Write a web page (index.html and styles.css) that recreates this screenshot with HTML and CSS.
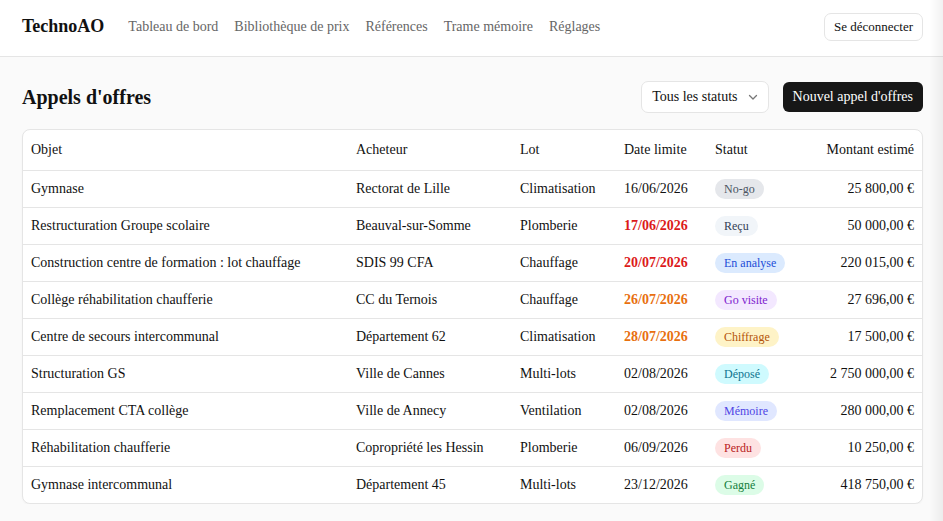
FILE: index.html
```html
<!DOCTYPE html>
<html lang="fr">
<head>
<meta charset="utf-8">
<title>TechnoAO</title>
<link rel="stylesheet" href="styles.css">
</head>
<body>
<header class="topbar">
  <div class="brand">TechnoAO</div>
  <nav class="nav">
    <a href="#">Tableau de bord</a>
    <a href="#">Bibliothèque de prix</a>
    <a href="#">Références</a>
    <a href="#">Trame mémoire</a>
    <a href="#">Réglages</a>
  </nav>
  <button class="btn-outline">Se déconnecter</button>
</header>
<main class="main">
  <div class="toolbar">
    <h1 class="title">Appels d'offres</h1>
    <div class="actions">
      <div class="select">Tous les statuts
        <svg class="chev" width="12" height="12" viewBox="0 0 12 12"><path d="M2.5 4.5 6 8l3.5-3.5" fill="none" stroke="#777" stroke-width="1.3" stroke-linecap="round" stroke-linejoin="round"/></svg>
      </div>
      <button class="btn-dark">Nouvel appel d'offres</button>
    </div>
  </div>
  <div class="card">
    <table class="tbl">
      <colgroup>
        <col class="c-obj"><col class="c-ach"><col class="c-lot"><col class="c-date"><col class="c-stat"><col class="c-mont">
      </colgroup>
      <thead>
        <tr><th>Objet</th><th>Acheteur</th><th>Lot</th><th>Date limite</th><th>Statut</th><th class="r">Montant estimé</th></tr>
      </thead>
      <tbody>
        <tr><td>Gymnase</td><td>Rectorat de Lille</td><td>Climatisation</td><td>16/06/2026</td><td><span class="badge b-nogo">No-go</span></td><td class="r">25 800,00 €</td></tr>
        <tr><td>Restructuration Groupe scolaire</td><td>Beauval-sur-Somme</td><td>Plomberie</td><td class="d-red">17/06/2026</td><td><span class="badge b-recu">Reçu</span></td><td class="r">50 000,00 €</td></tr>
        <tr><td>Construction centre de formation : lot chauffage</td><td>SDIS 99 CFA</td><td>Chauffage</td><td class="d-red">20/07/2026</td><td><span class="badge b-analyse">En analyse</span></td><td class="r">220 015,00 €</td></tr>
        <tr><td>Collège réhabilitation chaufferie</td><td>CC du Ternois</td><td>Chauffage</td><td class="d-orange">26/07/2026</td><td><span class="badge b-visite">Go visite</span></td><td class="r">27 696,00 €</td></tr>
        <tr><td>Centre de secours intercommunal</td><td>Département 62</td><td>Climatisation</td><td class="d-orange">28/07/2026</td><td><span class="badge b-chiffrage">Chiffrage</span></td><td class="r">17 500,00 €</td></tr>
        <tr><td>Structuration GS</td><td>Ville de Cannes</td><td>Multi-lots</td><td>02/08/2026</td><td><span class="badge b-depose">Déposé</span></td><td class="r">2 750 000,00 €</td></tr>
        <tr><td>Remplacement CTA collège</td><td>Ville de Annecy</td><td>Ventilation</td><td>02/08/2026</td><td><span class="badge b-memoire">Mémoire</span></td><td class="r">280 000,00 €</td></tr>
        <tr><td>Réhabilitation chaufferie</td><td>Copropriété les Hessin</td><td>Plomberie</td><td>06/09/2026</td><td><span class="badge b-perdu">Perdu</span></td><td class="r">10 250,00 €</td></tr>
        <tr><td>Gymnase intercommunal</td><td>Département 45</td><td>Multi-lots</td><td>23/12/2026</td><td><span class="badge b-gagne">Gagné</span></td><td class="r">418 750,00 €</td></tr>
      </tbody>
    </table>
  </div>
</main>
<div class="edge-shade"></div>
</body>
</html>
```
FILE: styles.css
```css
* { box-sizing: border-box; }
html, body { margin: 0; padding: 0; }
body {
  font-family: "Liberation Serif", "Times New Roman", serif;
  background: #fafafa;
  color: #111;
  font-size: 14px;
}
.topbar {
  height: 57px;
  background: #fff;
  border-bottom: 1px solid #e5e5e5;
  display: flex;
  align-items: center;
  padding: 0 20px 3px 22px;
}
.brand {
  font-weight: bold;
  font-size: 18px;
  color: #111;
  margin-right: 24px;
}
.nav { display: flex; gap: 16px; flex: 1; }
.nav a {
  color: #666;
  text-decoration: none;
  font-size: 14px;
}
.btn-outline {
  font-family: inherit;
  font-size: 13px;
  color: #111;
  background: #fff;
  border: 1px solid #e5e5e5;
  border-radius: 7px;
  height: 28px;
  padding: 0 9px;
}
.main { padding: 24px 20px 0 22px; }
.toolbar {
  display: flex;
  align-items: center;
  justify-content: space-between;
  height: 32px;
  margin-bottom: 16px;
}
.title {
  margin: 0;
  font-size: 20px;
  font-weight: bold;
}
.actions { display: flex; gap: 14px; align-items: center; }
.select {
  height: 32px;
  border: 1px solid #e5e5e5;
  border-radius: 7px;
  background: #fff;
  display: flex;
  align-items: center;
  gap: 9px;
  padding: 0 9px 0 10px;
  font-size: 14px;
}
.chev { display: block; }
.btn-dark {
  font-family: inherit;
  font-size: 14px;
  color: #fff;
  background: #171717;
  border: none;
  border-radius: 6px;
  height: 30px;
  padding: 0 10px;
}
.card {
  background: #fff;
  border: 1px solid #e5e5e5;
  border-radius: 8px;
  overflow: hidden;
  box-shadow: 0 1px 2px rgba(0,0,0,0.03);
}
.tbl {
  width: 100%;
  border-collapse: collapse;
  table-layout: fixed;
}
.c-obj { width: 325px; }
.c-ach { width: 164px; }
.c-lot { width: 104px; }
.c-date { width: 91px; }
.c-stat { width: 90px; }
.tbl th, .tbl td {
  text-align: left;
  font-weight: normal;
  padding: 0 8px;
  height: 37px;
  white-space: nowrap;
}
.tbl th { height: 40px; }
.tbl tbody td { border-top: 1px solid #e5e5e5; }
.tbl .r { text-align: right; }
.tbl .d-red { color: #dc1a1a; font-weight: bold; }
.tbl .d-orange { color: #e8700f; font-weight: bold; }
.badge {
  display: inline-block;
  font-size: 12px;
  line-height: 14px;
  padding: 3px 9px;
  border-radius: 999px;
}
.b-nogo { background: #e5e7eb; color: #4b5563; }
.b-recu { background: #f1f5f9; color: #334155; }
.b-analyse { background: #dbeafe; color: #1d4ed8; }
.b-visite { background: #f3e8ff; color: #7e22ce; }
.b-chiffrage { background: #fef3c7; color: #b45309; }
.b-depose { background: #cffafe; color: #0e7490; }
.b-memoire { background: #e0e7ff; color: #4f46e5; }
.b-perdu { background: #fee2e2; color: #b91c1c; }
.b-gagne { background: #dcfce7; color: #15803d; }
.edge-shade {
  position: fixed;
  top: 0;
  right: 0;
  width: 14px;
  height: 100%;
  background: linear-gradient(to right, rgba(0,0,0,0), rgba(0,0,0,0.05));
  pointer-events: none;
}
```
